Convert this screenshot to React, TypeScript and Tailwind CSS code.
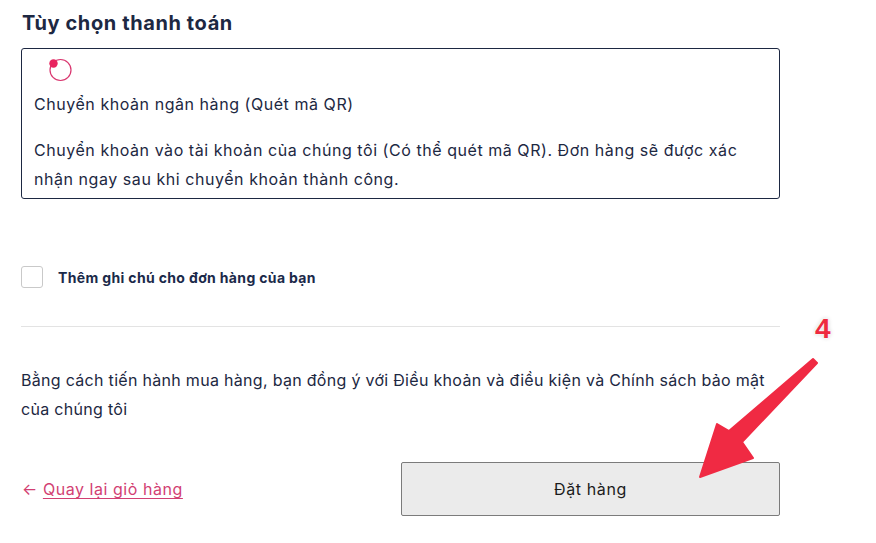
import React from "react";

export default function App() {
  return (
    <div className="relative w-[876px] h-[543px] bg-white overflow-hidden" style={{ fontFamily: "Inter, 'Noto Sans', sans-serif" }}>
      <div className="w-[759px] ml-[21px] pt-[9px] text-[#1d2842]">
        <h2 className="text-[20px] leading-[28px] font-bold pl-[1px] tracking-[0.6px]">Tùy chọn thanh toán</h2>
        <div className="mt-[11px] border border-[#1d2842] rounded-[3px] h-[151px] px-[12px]">
          <div className="pt-[8px] pl-[12px] h-[34px]">
            <svg width="26" height="26" viewBox="0 0 26 26">
              <circle cx="14.5" cy="13" r="10.5" fill="none" stroke="#d9366f" strokeWidth="1.2" />
              <circle cx="7.5" cy="6.5" r="4.2" fill="#e8245f" />
            </svg>
          </div>
          <div className="text-[16px] leading-[24px] mt-[9px] tracking-[0.55px]">Chuyển khoản ngân hàng (Quét mã QR)</div>
          <div className="text-[16px] leading-[29px] mt-[20px] pr-[20px] tracking-[0.55px]">
            Chuyển khoản vào tài khoản của chúng tôi (Có thể quét mã QR). Đơn hàng sẽ được xác nhận ngay sau khi chuyển khoản thành công.
          </div>
        </div>
        <div className="mt-[67px] flex items-center gap-[15px]">
          <div className="w-[22px] h-[22px] border border-[#c9c9c9] rounded-[3px]" />
          <span className="text-[14px] font-bold text-[#1b2a4a] tracking-[0.35px]">Thêm ghi chú cho đơn hàng của bạn</span>
        </div>
        <div className="mt-[38px] border-t border-[#e3e3e3]" />
        <p className="mt-[39px] text-[16px] leading-[29px] tracking-[0.3px]">
          Bằng cách tiến hành mua hàng, bạn đồng ý với Điều khoản và điều kiện và Chính sách bảo mật của chúng tôi
        </p>
        <div className="mt-[38px] flex items-center justify-between">
          <a className="text-[16px] text-[#d23f73] pl-[1px] tracking-[0.55px]">
            ← <span className="underline underline-offset-[3px]">Quay lại giỏ hàng</span>
          </a>
          <button className="w-[379px] h-[54px] bg-[#ebebeb] border border-[#7b7b7b] rounded-[2px] text-[16px] text-[#1b1b1b] tracking-[0.6px]">
            Đặt hàng
          </button>
        </div>
      </div>
      <div
        className="absolute left-[815px] top-[308px] text-[28px] font-bold text-[#ee2a3f]"
        style={{ fontFamily: "'Liberation Sans', Arial, sans-serif", textShadow: "0 0 2px #fff, 0 0 3px #fff, 0 0 4px rgba(0,0,0,0.25)" }}
      >
        4
      </div>
      <svg className="absolute left-0 top-0" width="876" height="543" viewBox="0 0 876 543">
        <path
          d="M813 359 L817 363 L742 442 L753 458 L700 477 L717 424 L729 431 Z"
          fill="#f02a43"
          stroke="#f02a43"
          strokeWidth="2"
          strokeLinejoin="round"
        />
      </svg>
    </div>
  );
}
